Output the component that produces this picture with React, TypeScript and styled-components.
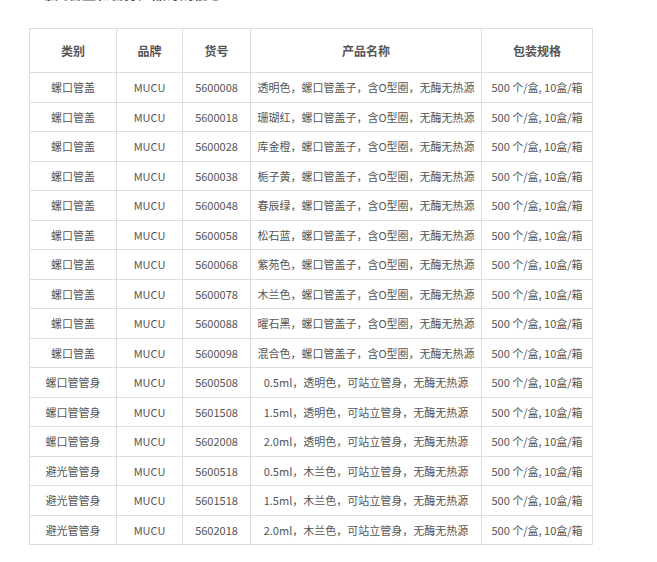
import React from "react";
import styled, { createGlobalStyle } from "styled-components";

const Global = createGlobalStyle`
  html, body { margin: 0; padding: 0; background: #fff; }
  body { font-family: "Noto Sans CJK SC", "Noto Sans", sans-serif; color: #555; }
`;

const Page = styled.div`
  padding: 0 0 0 29px;
  width: 564px;
`;

const Heading = styled.p`
  margin: -17px 0 25px 11px;
  font-size: 14px;
  line-height: 20px;
  font-weight: bold;
  color: #555;
`;

const Table = styled.table`
  border-collapse: collapse;
  width: 564px;
  table-layout: fixed;
  border: 1px solid #ddd;
`;

const Col = styled.col<{ $w: number }>`
  width: ${(p) => p.$w}px;
`;

const Th = styled.th`
  border: 1px solid #ddd;
  padding: 12px 0;
  font-size: 12px;
  line-height: 19px;
  font-weight: bold;
  color: #555;
  text-align: center;
`;

const Td = styled.td`
  border: 1px solid #ddd;
  padding: 5.25px 0;
  font-size: 11px;
  line-height: 18px;
  color: #555;
  text-align: center;
  white-space: nowrap;
  overflow: hidden;
`;

const cols = [
  { t: "类别", w: 87 },
  { t: "品牌", w: 66 },
  { t: "货号", w: 68 },
  { t: "产品名称", w: 231 },
  { t: "包装规格", w: 111 },
];

const caps = [
  ["5600008", "透明色"],
  ["5600018", "珊瑚红"],
  ["5600028", "库金橙"],
  ["5600038", "栀子黄"],
  ["5600048", "春辰绿"],
  ["5600058", "松石蓝"],
  ["5600068", "紫苑色"],
  ["5600078", "木兰色"],
  ["5600088", "曜石黑"],
  ["5600098", "混合色"],
];

const rows: string[][] = [
  ...caps.map(([no, c]) => ["螺口管盖", "MUCU", no, `${c}，螺口管盖子，含O型圈，无酶无热源`]),
  ["螺口管管身", "MUCU", "5600508", "0.5ml，透明色，可站立管身，无酶无热源"],
  ["螺口管管身", "MUCU", "5601508", "1.5ml，透明色，可站立管身，无酶无热源"],
  ["螺口管管身", "MUCU", "5602008", "2.0ml，透明色，可站立管身，无酶无热源"],
  ["避光管管身", "MUCU", "5600518", "0.5ml，木兰色，可站立管身，无酶无热源"],
  ["避光管管身", "MUCU", "5601518", "1.5ml，木兰色，可站立管身，无酶无热源"],
  ["避光管管身", "MUCU", "5602018", "2.0ml，木兰色，可站立管身，无酶无热源"],
];

export default function App() {
  return (
    <Page>
      <Global />
      <Heading>螺口管盖和管身产品订购信息：</Heading>
      <Table>
        <colgroup>
          {cols.map((c) => (
            <Col key={c.t} $w={c.w} />
          ))}
        </colgroup>
        <thead>
          <tr>
            {cols.map((c) => (
              <Th key={c.t}>{c.t}</Th>
            ))}
          </tr>
        </thead>
        <tbody>
          {rows.map((r) => (
            <tr key={r[2]}>
              {r.map((v, i) => (
                <Td key={i}>{v}</Td>
              ))}
              <Td>500 个/盒, 10盒/箱</Td>
            </tr>
          ))}
        </tbody>
      </Table>
    </Page>
  );
}
